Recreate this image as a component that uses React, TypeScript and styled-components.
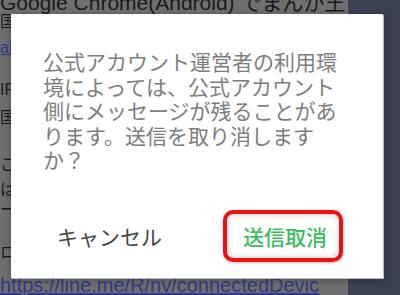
import React from "react";
import styled, { createGlobalStyle } from "styled-components";

const Global = createGlobalStyle`
  html, body { margin: 0; padding: 0; }
  body {
    width: 400px;
    height: 295px;
    overflow: hidden;
    font-family: "Noto Sans CJK JP", "Noto Sans", sans-serif;
  }
`;

const Screen = styled.div`
  position: relative;
  width: 400px;
  height: 295px;
  display: flex;
  overflow: hidden;
`;

const Page = styled.div`
  width: 348px;
  height: 100%;
  background: #6f6f6f;
  display: flex;
  flex-direction: column;
  overflow: hidden;
  font-family: "Liberation Sans", "Noto Sans CJK JP", sans-serif;
  color: #1e1e1e;
`;

const SideStrip = styled.div`
  flex: 1;
  background: #3a4151;
`;

const BgLine = styled.div<{ $gap: number; $size: number; $link?: boolean }>`
  margin-top: ${(p) => p.$gap}px;
  font-size: ${(p) => p.$size}px;
  line-height: ${(p) => p.$size}px;
  white-space: nowrap;
  color: ${(p) => (p.$link ? "#2f3b86" : "#1a1a1a")};
  text-decoration: ${(p) => (p.$link ? "underline" : "none")};
`;

const Dialog = styled.div`
  position: absolute;
  left: 11px;
  top: 14px;
  width: 372px;
  height: 264px;
  background: #ffffff;
  box-shadow: 1px 1px 0 #b9bcc2, 0 2px 8px rgba(0, 0, 0, 0.3);
  display: flex;
  flex-direction: column;
  box-sizing: border-box;
  padding: 35px 0 16px 0;
`;

const Message = styled.p`
  margin: 0 0 0 32px;
  width: 300px;
  font-size: 21px;
  line-height: 24.5px;
  color: #7e7e7e;
  font-family: "Noto Sans CJK JP", sans-serif;
`;

const ButtonRow = styled.div`
  margin-top: auto;
  display: flex;
  align-items: center;
  padding-left: 34px;
  gap: 49px;
`;

const TextButton = styled.button<{ $primary?: boolean }>`
  appearance: none;
  background: transparent;
  border: none;
  font-family: "Noto Sans CJK JP", sans-serif;
  font-size: 21px;
  line-height: 26px;
  padding: 0 12px;
  color: ${(p) => (p.$primary ? "#3cbd5e" : "#454545")};
  font-weight: ${(p) => (p.$primary ? 500 : 400)};
`;

const Highlight = styled.div`
  width: 120px;
  height: 52px;
  box-sizing: border-box;
  border: 4px solid #f2100f;
  border-radius: 10px;
  display: flex;
  align-items: center;
  justify-content: center;
  padding-left: 4px;
  box-shadow: inset 0 0 6px rgba(0, 0, 0, 0.22), 0 1px 3px rgba(0, 0, 0, 0.25);
`;

export default function App() {
  return (
    <>
      <Global />
      <Screen>
        <Page>
          <BgLine $gap={-8} $size={21}>Google Chrome(Android) でまんが王</BgLine>
          <BgLine $gap={1} $size={16}>国内のサービス</BgLine>
          <BgLine $gap={10} $size={16} $link>about</BgLine>
          <BgLine $gap={26} $size={16}>IFTTT</BgLine>
          <BgLine $gap={12} $size={16}>国際</BgLine>
          <BgLine $gap={31} $size={16}>この</BgLine>
          <BgLine $gap={9} $size={16}>は</BgLine>
          <BgLine $gap={4} $size={16}>ーー</BgLine>
          <BgLine $gap={27} $size={16}>ロ</BgLine>
          <BgLine $gap={14} $size={20} $link>https://line.me/R/nv/connectedDevic</BgLine>
        </Page>
        <SideStrip />
        <Dialog>
          <Message>
            公式アカウント運営者の利用環境によっては、公式アカウント側にメッセージが残ることがあります。送信を取り消しますか？
          </Message>
          <ButtonRow>
            <TextButton>キャンセル</TextButton>
            <Highlight>
              <TextButton $primary>送信取消</TextButton>
            </Highlight>
          </ButtonRow>
        </Dialog>
      </Screen>
    </>
  );
}
